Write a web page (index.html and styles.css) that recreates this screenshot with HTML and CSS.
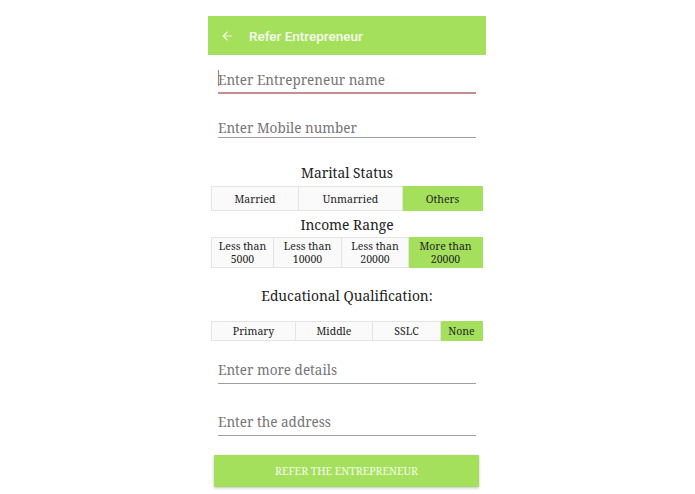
FILE: index.html
```html
<!DOCTYPE html>
<html>
<head>
<meta charset="utf-8">
<link rel="stylesheet" href="styles.css">
</head>
<body>
<div class="phone">
  <header class="appbar">
    <svg class="back" width="14" height="14" viewBox="0 0 24 24"><path d="M20 11H7.83l5.59-5.59L12 4l-8 8 8 8 1.41-1.41L7.83 13H20v-2z" fill="#fff" fill-opacity="0.85"/></svg>
    <span class="title">Refer Entrepreneur</span>
  </header>
  <div class="field focused first"><span class="caret"></span><span class="ph">Enter Entrepreneur name</span></div>
  <div class="field second"><span class="ph">Enter Mobile number</span></div>

  <div class="label l1">Marital Status</div>
  <div class="seg seg1">
    <div class="cell c1">Married</div>
    <div class="cell c2">Unmarried</div>
    <div class="cell c3 on">Others</div>
  </div>

  <div class="label l2">Income Range</div>
  <div class="seg seg2">
    <div class="cell d1"><span>Less than</span><span>5000</span></div>
    <div class="cell d2"><span>Less than</span><span>10000</span></div>
    <div class="cell d3"><span>Less than</span><span>20000</span></div>
    <div class="cell d4 on"><span>More than</span><span>20000</span></div>
  </div>

  <div class="label l3">Educational Qualification:</div>
  <div class="seg seg3">
    <div class="cell e1">Primary</div>
    <div class="cell e2">Middle</div>
    <div class="cell e3">SSLC</div>
    <div class="cell e4 on">None</div>
  </div>

  <div class="field third"><span class="ph">Enter more details</span></div>
  <div class="field fourth"><span class="ph">Enter the address</span></div>

  <div class="btn">REFER THE ENTREPRENEUR</div>
</div>
</body>
</html>
```

FILE: styles.css
```css
html, body { margin: 0; padding: 0; background: #fff; }
body { width: 695px; height: 494px; overflow: hidden; font-family: "Noto Serif", "DejaVu Serif", serif; color: #222; }
.phone { width: 278px; margin: 16px 0 0 208px; display: flex; flex-direction: column; }
.appbar { height: 39px; background: #a4e05c; display: flex; align-items: center; padding-left: 12px; }
.back { margin-right: 15px; }
.title { font-family: Roboto, "Noto Sans", sans-serif; font-weight: 500; color: #f7fcef; font-size: 13.5px; }
.field { margin: 0 10px 0 10px; border-bottom: 1px solid #9e9e9e; display: flex; align-items: flex-end; padding-bottom: 0; position: relative; }
.field .ph { font-size: 13.5px; color: #757575; line-height: 18px; }
.field.focused { border-bottom: 2px solid #c58e8e; padding-bottom: 3px; }
.caret { position: absolute; left: 0; bottom: 6px; width: 1px; height: 16px; background: #b07a7a; }
.first { margin-top: 16px; }
.second { margin-top: 25px; }
.third, .fourth { padding-bottom: 4px; }
.label { text-align: center; font-size: 13.8px; color: #222; line-height: 18px; }
.l1 { margin-top: 26px; }
.seg { display: flex; margin: 0 3px; }
.seg1 { margin-top: 4px; height: 25px; }
.l2 { margin-top: 5px; }
.seg2 { margin-top: 3px; height: 31px; }
.l3 { margin-top: 19px; }
.seg3 { margin-top: 16px; height: 20px; }
.cell { box-sizing: border-box; background: #fafafa; border: 1px solid #e4e4e4; border-left: none; display: flex; flex-direction: column; align-items: center; justify-content: center; text-align: center; font-size: 10.5px; color: #222; line-height: 12px; }
.cell span { display: block; line-height: 13px; height: 13px; }
.cell:first-child { border-left: 1px solid #e4e4e4; }
.cell.on { background: #a4e05c; border-color: #a4e05c; }
.c1 { width: 88px; } .c2 { width: 104px; } .c3 { width: 80px; }
.d1 { width: 63px; } .d2 { width: 68px; } .d3 { width: 67px; } .d4 { width: 74px; }
.e1 { width: 85px; } .e2 { width: 77px; } .e3 { width: 68px; } .e4 { width: 42px; }
.third { margin-top: 20px; }
.fourth { margin-top: 29px; }
.btn { margin: 19px 7px 0 6px; height: 32px; background: #a4e05c; color: #f4fbe9; font-size: 10.5px; display: flex; align-items: center; justify-content: center; box-shadow: 0 1px 3px rgba(0,0,0,0.25); border-radius: 1px; }
```
